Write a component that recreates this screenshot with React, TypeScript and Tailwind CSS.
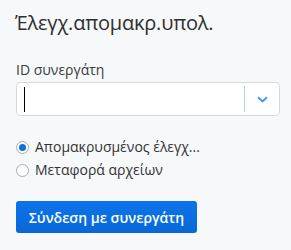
export default function App() {
  return (
    <div
      className="w-[291px] h-[250px] bg-[#f7f8fa] px-4 pt-[9px] text-[#333]"
      style={{ fontFamily: '"Open Sans", "Noto Sans", sans-serif' }}
    >
      <h1 className="text-[20px] leading-[28px] text-[#2f2f2f] -ml-px tracking-[-0.2px]">
        Έλεγχ.απομακρ.υπολ.
      </h1>

      <label className="block mt-[23px] text-[14px] leading-[20px] text-[#3a3a3a]">
        ID συνεργάτη
      </label>

      <div className="mt-[2px] flex h-[34px] w-[264px] items-center rounded-[4px] border border-[#d5d9de] bg-white">
        <div className="flex-1 pl-[7px]">
          <div className="h-[25px] w-px bg-black" />
        </div>
        <div className="h-[26px] w-px bg-[#a9d2f5]" />
        <div className="flex w-[34px] items-center justify-center">
          <svg width="11" height="7" viewBox="0 0 11 7">
            <path d="M1 1.2 L5.5 5.4 L10 1.2" fill="none" stroke="#3d9cf2" strokeWidth="2" />
          </svg>
        </div>
      </div>

      <div className="mt-[22px] flex flex-col gap-[5px] text-[14px] leading-[18px] text-[#333]">
        <div className="flex items-center gap-[6px]">
          <span className="flex h-[13px] w-[13px] items-center justify-center rounded-full border border-[#a8adb3] bg-white">
            <span className="h-[7px] w-[7px] rounded-full bg-[#0f6fdb]" />
          </span>
          <span>Απομακρυσμένος έλεγχ...</span>
        </div>
        <div className="flex items-center gap-[6px]">
          <span className="h-[13px] w-[13px] rounded-full border border-[#a8adb3] bg-white" />
          <span>Μεταφορά αρχείων</span>
        </div>
      </div>

      <button className="mt-[22px] h-[32px] w-[181px] rounded-[3px] bg-gradient-to-b from-[#0c75ea] to-[#0867d8] text-[14px] font-semibold text-white">
        Σύνδεση με συνεργάτη
      </button>
    </div>
  );
}
